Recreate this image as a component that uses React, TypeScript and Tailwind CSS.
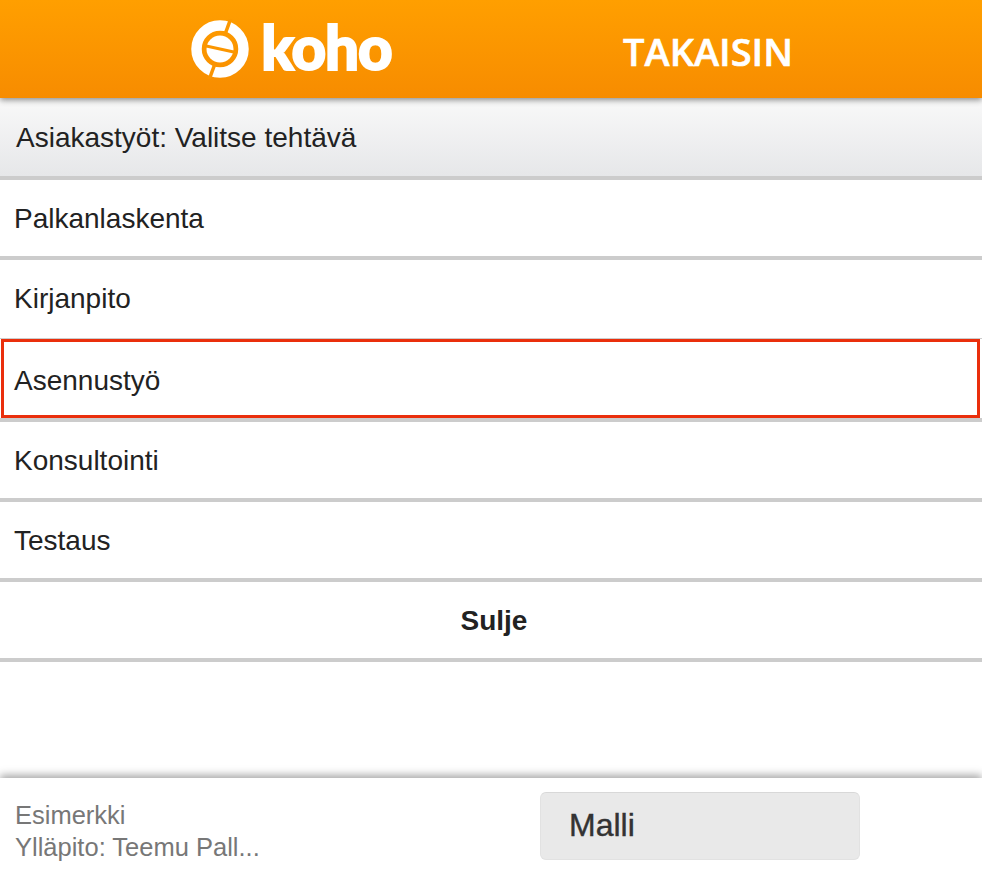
const Logo = () => (
  <svg width="60" height="60" viewBox="0 0 60 60" className="shrink-0">
    <circle cx="30" cy="30" r="23.5" fill="none" stroke="#fff" strokeWidth="10.5" />
    <circle cx="30" cy="30" r="13.5" fill="#fff" />
    <path d="M35.5 14 L41 -1" stroke="#fb9800" strokeWidth="3.5" />
    <path d="M24.5 46 L19 61" stroke="#fa9400" strokeWidth="3.5" />
    <path d="M14 26.5 L46 33.5" stroke="#fb9600" strokeWidth="3" />
  </svg>
);

const Row = ({ label }: { label: string }) => (
  <div className="h-20 shrink-0 pl-[14px] pt-[2px] flex items-center bg-white border-b-4 border-[#cccccc]">{label}</div>
);

export default function App() {
  return (
    <div className="min-h-screen flex flex-col bg-white font-['Liberation_Sans',Arial,sans-serif] text-[28px] text-[#222]">
      <div className="h-[98px] shrink-0 flex items-center bg-gradient-to-b from-[#ff9f00] to-[#f78c00] shadow-[0_2px_6px_rgba(0,0,0,0.45)] relative">
        <div className="w-[583px] flex items-center justify-center gap-[11px] pr-[1px]">
          <Logo />
          <span className="font-['Lato',sans-serif] font-black text-[60px] leading-none text-white tracking-[-1px] -mt-[4px] [-webkit-text-stroke:2px_white]">
            koho
          </span>
        </div>
        <div className="w-[250px] pt-[4px] text-center font-['Open_Sans',sans-serif] font-semibold text-[38px] text-white [-webkit-text-stroke:0.6px_white]">
          TAKAISIN
        </div>
      </div>

      <div className="h-[82px] shrink-0 flex items-center pl-4 pt-[1px] bg-gradient-to-b from-[#f9f9f9] to-[#e6e7e9] border-b-4 border-[#cccccc]">
        Asiakastyöt: Valitse tehtävä
      </div>

      <Row label="Palkanlaskenta" />
      <div className="h-[78px] shrink-0 pl-[14px] flex items-center bg-white">Kirjanpito</div>

      {/* selected row */}
      <div className="h-[84px] shrink-0 border-t border-b-4 border-[#cccccc] bg-white">
        <div className="h-[79px] mx-px mr-[2px] pl-[10px] pt-[4px] flex items-center border-[3px] border-[#ea2f0c]">
          Asennustyö
        </div>
      </div>

      <Row label="Konsultointi" />
      <Row label="Testaus" />
      <div className="h-20 shrink-0 pl-[6px] pt-[2px] flex items-center justify-center border-b-4 border-[#cccccc] font-bold">
        Sulje
      </div>

      <div className="mt-auto h-[96px] shrink-0 flex bg-white shadow-[0_-3px_8px_rgba(0,0,0,0.35)] relative">
        <div className="w-[540px] pl-[15px] pt-[21px] text-[25.5px] text-[#777] leading-8">
          <div>Esimerkki</div>
          <div>Ylläpito: Teemu Pall...</div>
        </div>
        <div className="mt-[14px] w-[320px] h-[68px] pl-[28px] pt-[14px] rounded-md bg-[#e9e9e9] border border-[#e2e2e2] border-t-[#d8d8d8] text-[32px] leading-9 text-[#333] [-webkit-text-stroke:0.4px_#333]">
          Malli
        </div>
      </div>
    </div>
  );
}
